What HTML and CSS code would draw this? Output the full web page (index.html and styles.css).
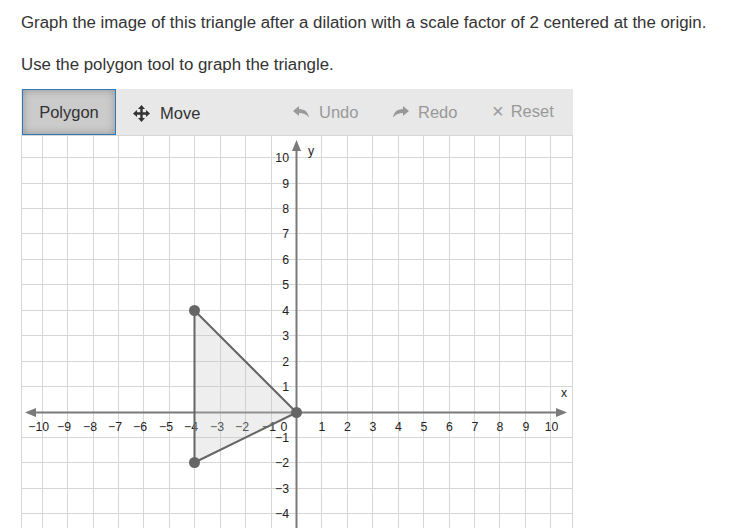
FILE: index.html
```html
<!DOCTYPE html>
<html>
<head>
<meta charset="utf-8">
<link rel="stylesheet" href="styles.css">
</head>
<body>
<div class="page">
  <p class="q first">Graph the image of this triangle after a dilation with a scale factor of 2 centered at the origin.</p>
  <p class="q second">Use the polygon tool to graph the triangle.</p>
  <div class="tool">
    <div class="toolbar">
      <button class="btn active">Polygon</button>
      <div class="item move">
        <svg class="ico" width="17" height="17" viewBox="0 0 17 17">
          <path d="M8.5 0 L12 4 H9.7 V7.3 H13 V5 L17 8.5 L13 12 V9.7 H9.7 V13 H12 L8.5 17 L5 13 H7.3 V9.7 H4 V12 L0 8.5 L4 5 V7.3 H7.3 V4 H5 Z" fill="#333"/>
        </svg>
        <span>Move</span>
      </div>
      <div class="item dis undo">
        <svg class="ico" width="16" height="12" viewBox="0 0 16 12">
          <path d="M6 0 L0 5 L6 10 V7 C10 7 13 8 16 11.5 C15 6 12 3.2 6 3 Z" fill="#999"/>
        </svg>
        <span>Undo</span>
      </div>
      <div class="item dis redo">
        <svg class="ico" width="16" height="12" viewBox="0 0 16 12">
          <path d="M10 0 L16 5 L10 10 V7 C6 7 3 8 0 11.5 C1 6 4 3.2 10 3 Z" fill="#999"/>
        </svg>
        <span>Redo</span>
      </div>
      <div class="item dis reset">
        <span class="x">×</span>
        <span>Reset</span>
      </div>
    </div>
    <div class="graph">
      <svg width="552" height="552" viewBox="0 0 552 552">
        <g class="grid">
          <line x1="21.5" y1="0" x2="21.5" y2="552"/>
          <line x1="46.5" y1="0" x2="46.5" y2="552"/>
          <line x1="72.5" y1="0" x2="72.5" y2="552"/>
          <line x1="97.5" y1="0" x2="97.5" y2="552"/>
          <line x1="122.5" y1="0" x2="122.5" y2="552"/>
          <line x1="148.5" y1="0" x2="148.5" y2="552"/>
          <line x1="173.5" y1="0" x2="173.5" y2="552"/>
          <line x1="199.5" y1="0" x2="199.5" y2="552"/>
          <line x1="224.5" y1="0" x2="224.5" y2="552"/>
          <line x1="250.5" y1="0" x2="250.5" y2="552"/>
          <line x1="300.5" y1="0" x2="300.5" y2="552"/>
          <line x1="326.5" y1="0" x2="326.5" y2="552"/>
          <line x1="351.5" y1="0" x2="351.5" y2="552"/>
          <line x1="377.5" y1="0" x2="377.5" y2="552"/>
          <line x1="402.5" y1="0" x2="402.5" y2="552"/>
          <line x1="428.5" y1="0" x2="428.5" y2="552"/>
          <line x1="453.5" y1="0" x2="453.5" y2="552"/>
          <line x1="478.5" y1="0" x2="478.5" y2="552"/>
          <line x1="504.5" y1="0" x2="504.5" y2="552"/>
          <line x1="529.5" y1="0" x2="529.5" y2="552"/>
          <line x1="0" y1="22.5" x2="552" y2="22.5"/>
          <line x1="0" y1="48.5" x2="552" y2="48.5"/>
          <line x1="0" y1="73.5" x2="552" y2="73.5"/>
          <line x1="0" y1="98.5" x2="552" y2="98.5"/>
          <line x1="0" y1="124.5" x2="552" y2="124.5"/>
          <line x1="0" y1="149.5" x2="552" y2="149.5"/>
          <line x1="0" y1="175.5" x2="552" y2="175.5"/>
          <line x1="0" y1="200.5" x2="552" y2="200.5"/>
          <line x1="0" y1="226.5" x2="552" y2="226.5"/>
          <line x1="0" y1="251.5" x2="552" y2="251.5"/>
          <line x1="0" y1="302.5" x2="552" y2="302.5"/>
          <line x1="0" y1="327.5" x2="552" y2="327.5"/>
          <line x1="0" y1="353.5" x2="552" y2="353.5"/>
          <line x1="0" y1="378.5" x2="552" y2="378.5"/>
          <line x1="0" y1="404.5" x2="552" y2="404.5"/>
          <line x1="0" y1="429.5" x2="552" y2="429.5"/>
          <line x1="0" y1="455.5" x2="552" y2="455.5"/>
          <line x1="0" y1="480.5" x2="552" y2="480.5"/>
          <line x1="0" y1="505.5" x2="552" y2="505.5"/>
          <line x1="0" y1="531.5" x2="552" y2="531.5"/>
          <rect x="0.5" y="0.5" width="551" height="551" fill="none"/>
        </g>
        <g class="axes">
          <line x1="12" y1="277.5" x2="538" y2="277.5"/>
          <line x1="275.5" y1="14" x2="275.5" y2="552"/>
          <path d="M4 277.5 L15 273 L15 282 Z"/>
          <path d="M546 277.5 L535 273 L535 282 Z"/>
          <path d="M275.5 5 L271 16 L280 16 Z"/>
        </g>
        <g class="labels">
          <text x="17.7" y="296">−10</text>
          <text x="43" y="296">−9</text>
          <text x="69" y="296">−8</text>
          <text x="94" y="296">−7</text>
          <text x="119" y="296">−6</text>
          <text x="145" y="296">−5</text>
          <text x="170" y="296">−4</text>
          <text x="196" y="296">−3</text>
          <text x="221" y="296">−2</text>
          <text x="248" y="296">−1</text>
          <text x="301" y="296">1</text>
          <text x="326.5" y="296">2</text>
          <text x="352" y="296">3</text>
          <text x="377.5" y="296">4</text>
          <text x="403" y="296">5</text>
          <text x="428.5" y="296">6</text>
          <text x="454" y="296">7</text>
          <text x="479" y="296">8</text>
          <text x="505" y="296">9</text>
          <text x="530.5" y="296">10</text>
          <text x="263" y="296">0</text>
        </g>
        <g class="labels ylab">
          <text x="268" y="27">10</text>
          <text x="268" y="53">9</text>
          <text x="268" y="78">8</text>
          <text x="268" y="103">7</text>
          <text x="268" y="129">6</text>
          <text x="268" y="154">5</text>
          <text x="268" y="180">4</text>
          <text x="268" y="205">3</text>
          <text x="268" y="231">2</text>
          <text x="268" y="256">1</text>
          <text x="268" y="307">−1</text>
          <text x="268" y="332">−2</text>
          <text x="268" y="358">−3</text>
          <text x="268" y="383">−4</text>
          <text x="268" y="409">−5</text>
          <text x="268" y="434">−6</text>
          <text x="268" y="460">−7</text>
          <text x="268" y="485">−8</text>
          <text x="268" y="510">−9</text>
          <text x="268" y="536">−10</text>
        </g>
        <g class="labels">
          <text x="290" y="20">y</text>
          <text x="543" y="262">x</text>
        </g>
        <polygon class="tri" points="173.5,175.5 173.5,327.5 275.5,277.5"/>
        <g class="pts">
          <circle cx="173.5" cy="175.5" r="5.5"/>
          <circle cx="173.5" cy="327.5" r="5.5"/>
          <circle cx="275.5" cy="277.5" r="5.5"/>
        </g>
      </svg>
    </div>
  </div>
</div>
</body>
</html>
```

FILE: styles.css
```css
html, body {
  margin: 0;
  padding: 0;
  overflow: hidden;
  background: #fff;
}
.page {
  padding: 13px 0 0 21px;
  font-family: "Liberation Sans", Arial, sans-serif;
  color: #333;
}
.q {
  margin: 0;
  font-size: 16.85px;
  line-height: 20px;
}
.q.second {
  margin-top: 22px;
}
.tool {
  margin-top: 14px;
  width: 552px;
}
.toolbar {
  display: flex;
  align-items: center;
  height: 46px;
  background: #e8e8e8;
}
.btn {
  font-family: "Liberation Sans", Arial, sans-serif;
  font-size: 16.5px;
  color: #333;
  margin: 0 0 0 1px;
  width: 94px;
  height: 46px;
  border: 1px solid #2f7ab8;
  background: #cbcbcb;
  box-shadow: inset 0 0 8px rgba(0, 0, 0, 0.28);
  padding: 0;
}
.item {
  display: flex;
  align-items: center;
  font-size: 16.5px;
}
.ico {
  display: block;
}
.move {
  margin-left: 17px;
  width: 160px;
  gap: 10px;
  color: #333;
  margin-top: 2px;
}
.dis {
  color: #999;
}
.undo {
  width: 100px;
  gap: 10px;
}
.redo {
  width: 99px;
  gap: 9px;
}
.reset {
  gap: 7px;
  margin-top: -2px;
}
.reset .x {
  font-size: 20px;
  line-height: 20px;
}
.graph {
  height: 552px;
}
.graph svg {
  display: block;
}
.grid line, .grid rect {
  stroke: #d6d6d6;
  stroke-width: 1;
}
.axes line {
  stroke: #7a7a7a;
  stroke-width: 2;
}
.axes path {
  fill: #7a7a7a;
}
.labels text {
  font-family: "Liberation Sans", Arial, sans-serif;
  font-size: 12.3px;
  fill: #222;
  text-anchor: middle;
}
.ylab text {
  text-anchor: end;
}
.tri {
  fill: rgba(200, 200, 200, 0.3);
  stroke: #666;
  stroke-width: 2;
  stroke-linejoin: round;
}
.pts circle {
  fill: #666;
}
```
